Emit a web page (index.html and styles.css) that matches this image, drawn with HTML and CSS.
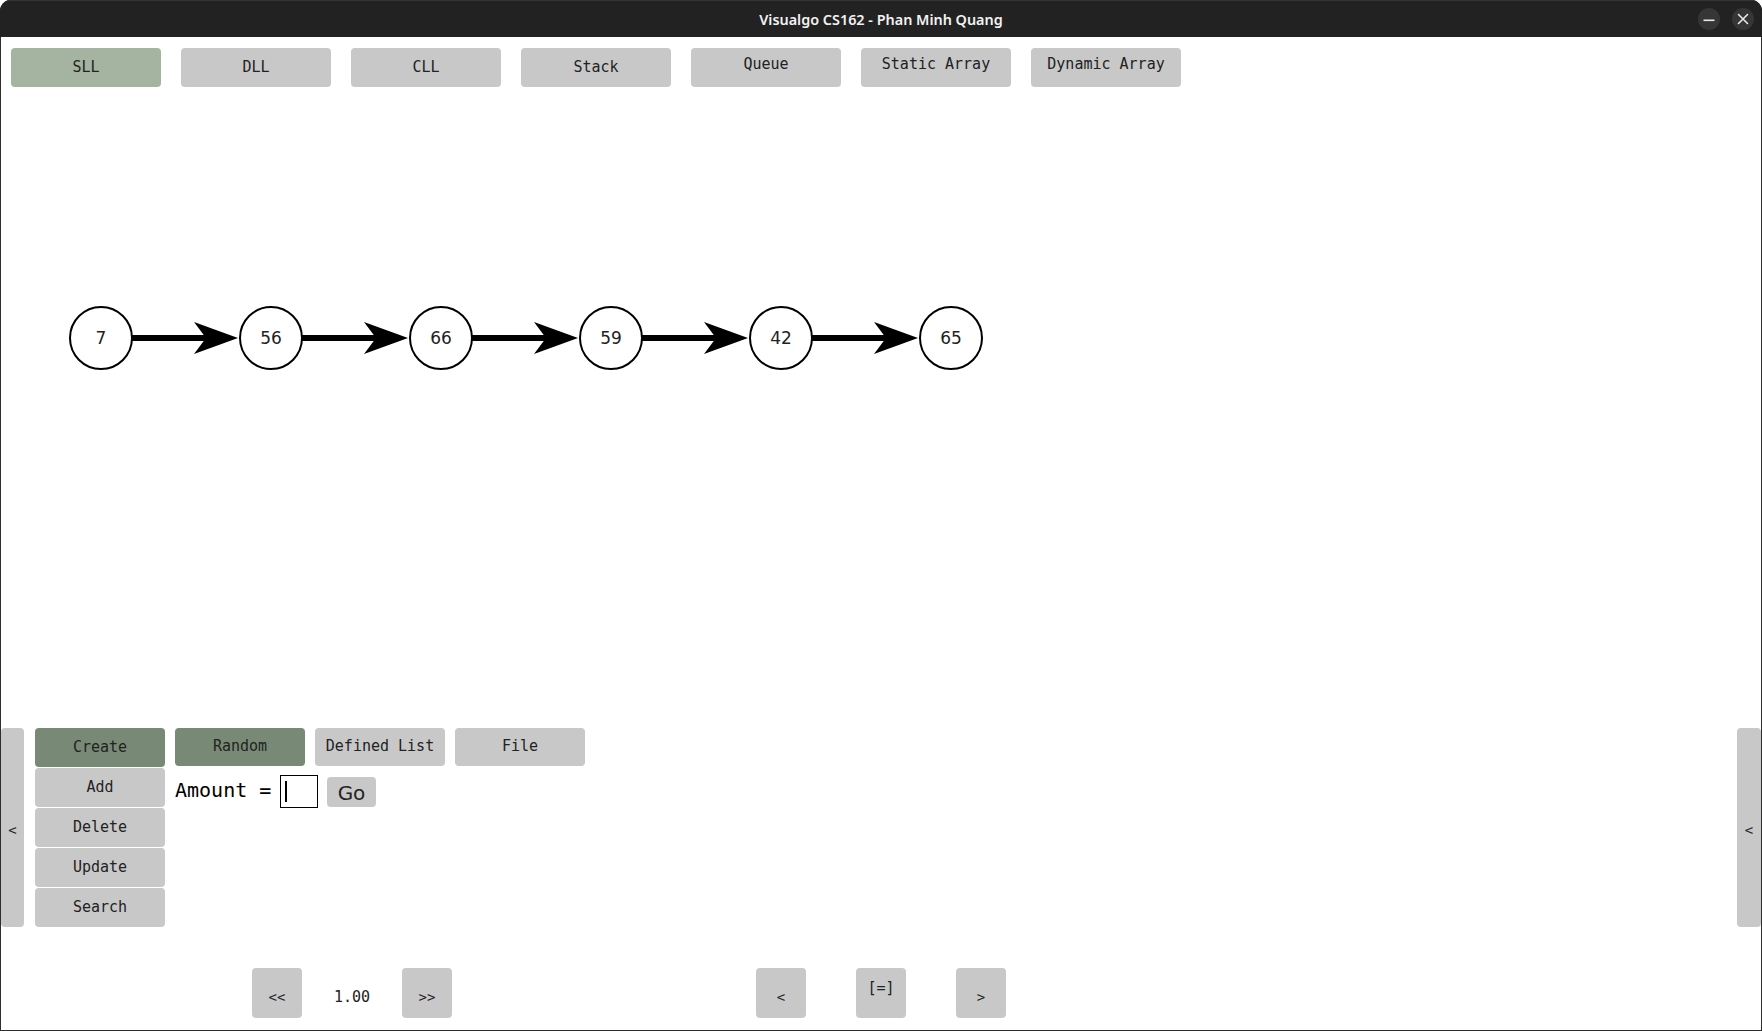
FILE: index.html
```html
<!DOCTYPE html>
<html lang="en">
<head>
<meta charset="utf-8">
<title>Visualgo CS162 - Phan Minh Quang</title>
<link rel="stylesheet" href="styles.css">
</head>
<body>
<div class="window">
  <header class="titlebar">
    <div class="title">Visualgo CS162 - Phan Minh Quang</div>
    <div class="winctl">
      <span class="wbtn"><svg width="22" height="22" viewBox="0 0 22 22"><rect x="5.5" y="11.5" width="11" height="1.6" fill="#e8e8e8"/></svg></span>
      <span class="wbtn"><svg width="22" height="22" viewBox="0 0 22 22"><path d="M6.5 6.5 L15.5 15.5 M15.5 6.5 L6.5 15.5" stroke="#e8e8e8" stroke-width="1.6" stroke-linecap="round"/></svg></span>
    </div>
  </header>
  <main class="content">
    <nav class="topnav">
      <button class="btn top active">SLL</button>
      <button class="btn top">DLL</button>
      <button class="btn top">CLL</button>
      <button class="btn top">Stack</button>
      <button class="btn top hi">Queue</button>
      <button class="btn top hi">Static Array</button>
      <button class="btn top hi">Dynamic Array</button>
    </nav>
    <section class="stage">
      <svg class="diagram" width="1760" height="640" viewBox="1 88 1760 640">
        <defs>
          <g id="arrow">
            <rect x="0" y="-3" width="76" height="6" fill="#000"/>
            <path d="M106 0 L62 -16 L74 0 L62 16 Z" fill="#000"/>
          </g>
        </defs>
        <use href="#arrow" x="132" y="338"/>
        <use href="#arrow" x="302" y="338"/>
        <use href="#arrow" x="472" y="338"/>
        <use href="#arrow" x="642" y="338"/>
        <use href="#arrow" x="812" y="338"/>
        <g class="node"><circle cx="101" cy="338" r="31"/><text x="101" y="344">7</text></g>
        <g class="node"><circle cx="271" cy="338" r="31"/><text x="271" y="344">56</text></g>
        <g class="node"><circle cx="441" cy="338" r="31"/><text x="441" y="344">66</text></g>
        <g class="node"><circle cx="611" cy="338" r="31"/><text x="611" y="344">59</text></g>
        <g class="node"><circle cx="781" cy="338" r="31"/><text x="781" y="344">42</text></g>
        <g class="node"><circle cx="951" cy="338" r="31"/><text x="951" y="344">65</text></g>
      </svg>
    </section>
    <section class="panel">
      <button class="btn tab">&lt;</button>
      <div class="menu">
        <button class="btn side dark">Create</button>
        <button class="btn side">Add</button>
        <button class="btn side">Delete</button>
        <button class="btn side">Update</button>
        <button class="btn side">Search</button>
      </div>
      <div class="options">
        <div class="optrow">
          <button class="btn opt dark">Random</button>
          <button class="btn opt">Defined List</button>
          <button class="btn opt">File</button>
        </div>
        <div class="amount">
          <span class="label">Amount =</span>
          <span class="input"><span class="caret"></span></span>
          <button class="btn go">Go</button>
        </div>
      </div>
      <button class="btn tab right">&lt;</button>
    </section>
    <footer class="playbar">
      <button class="btn sq">&lt;&lt;</button>
      <span class="speed">1.00</span>
      <button class="btn sq">&gt;&gt;</button>
      <button class="btn sq step">&lt;</button>
      <button class="btn sq mid up">[=]</button>
      <button class="btn sq mid">&gt;</button>
    </footer>
  </main>
</div>
</body>
</html>
```
FILE: styles.css
```css
* { box-sizing: border-box; }
html, body { margin: 0; padding: 0; background: #ffffff; }
body { width: 1762px; height: 1031px; overflow: hidden; }

.window {
  width: 1762px;
  height: 1031px;
  display: flex;
  flex-direction: column;
  border-radius: 11px 11px 0 0;
  overflow: hidden;
  background: #222222;
}

.titlebar {
  height: 37px;
  flex: none;
  background: #222222;
  border-top: 1px solid #353535;
  display: flex;
  align-items: center;
  justify-content: center;
  position: relative;
}
.title {
  font-family: "Noto Sans", "Open Sans", sans-serif;
  font-weight: 600;
  font-size: 14.4px;
  color: #f2f2f2;
  letter-spacing: 0;
}
.winctl {
  position: absolute;
  right: 8px;
  top: 7px;
  display: flex;
  gap: 12px;
}
.wbtn {
  width: 22px;
  height: 22px;
  border-radius: 50%;
  background: #363636;
  display: flex;
}

.content {
  flex: 1;
  background: #ffffff;
  border-left: 1px solid #2e2e2e;
  border-right: 1px solid #2e2e2e;
  border-bottom: 1px solid #2e2e2e;
  display: flex;
  flex-direction: column;
}

.btn {
  font-family: "DejaVu Sans Mono", "Liberation Mono", monospace;
  font-size: 15px;
  color: #222222;
  background: #c8c8c8;
  border: none;
  border-radius: 4px;
  padding: 0 0 2px 0;
  margin: 0;
  display: flex;
  align-items: center;
  justify-content: center;
}
.btn.active { background: #a4b4a0; }
.btn.dark { background: #788a76; }

.topnav {
  height: 51px;
  flex: none;
  display: flex;
  gap: 20px;
  padding: 11px 0 0 10px;
}
.btn.top { width: 150px; height: 39px; }
.btn.top.hi { padding-bottom: 8px; }

.stage {
  height: 640px;
  flex: none;
}
.diagram { display: block; }
.node circle { fill: #ffffff; stroke: #000000; stroke-width: 2; }
.node text {
  font-family: "DejaVu Sans", "Liberation Sans", sans-serif;
  font-size: 17px;
  fill: #222222;
  text-anchor: middle;
}

.panel {
  height: 199px;
  flex: none;
  display: flex;
  align-items: stretch;
}
.btn.tab {
  width: 23px;
  height: 199px;
  font-size: 14px;
  padding: 4px 0 0 0;
}
.btn.tab.right { margin-left: auto; width: 24px; }

.menu {
  margin-left: 11px;
  display: flex;
  flex-direction: column;
  gap: 1px;
  width: 130px;
}
.btn.side { width: 130px; height: 39px; }

.options {
  margin-left: 10px;
  display: flex;
  flex-direction: column;
}
.optrow { display: flex; gap: 10px; }
.btn.opt { width: 130px; height: 38px; }

.amount {
  display: flex;
  align-items: center;
  margin-top: 9px;
  height: 33px;
}
.label {
  font-family: "DejaVu Sans Mono", "Liberation Mono", monospace;
  font-size: 20px;
  color: #000000;
  width: 105px;
  white-space: pre;
  padding-bottom: 3px;
}
.input {
  width: 38px;
  height: 33px;
  border: 1.5px solid #000000;
  display: flex;
  align-items: center;
  padding-left: 4px;
}
.caret {
  width: 2px;
  height: 21px;
  background: #000000;
}
.btn.go {
  margin-left: 9px;
  width: 49px;
  height: 30px;
  font-family: "DejaVu Sans", "Liberation Sans", sans-serif;
  font-size: 20px;
  padding: 2px 0 0 0;
}

.playbar {
  flex: none;
  display: flex;
  align-items: flex-start;
  padding: 41px 0 0 251px;
  height: 103px;
}
.btn.sq { width: 50px; height: 50px; font-size: 14px; padding: 7px 0 0 0; }
.speed {
  width: 100px;
  height: 50px;
  display: flex;
  align-items: center;
  justify-content: center;
  font-family: "DejaVu Sans Mono", "Liberation Mono", monospace;
  font-size: 15px;
  color: #222222;
  padding-top: 7px;
}
.btn.sq.step { margin-left: 304px; }
.btn.sq.mid { margin-left: 50px; }
.btn.sq.up { padding: 0 0 10px 0; font-size: 15px; }
```
